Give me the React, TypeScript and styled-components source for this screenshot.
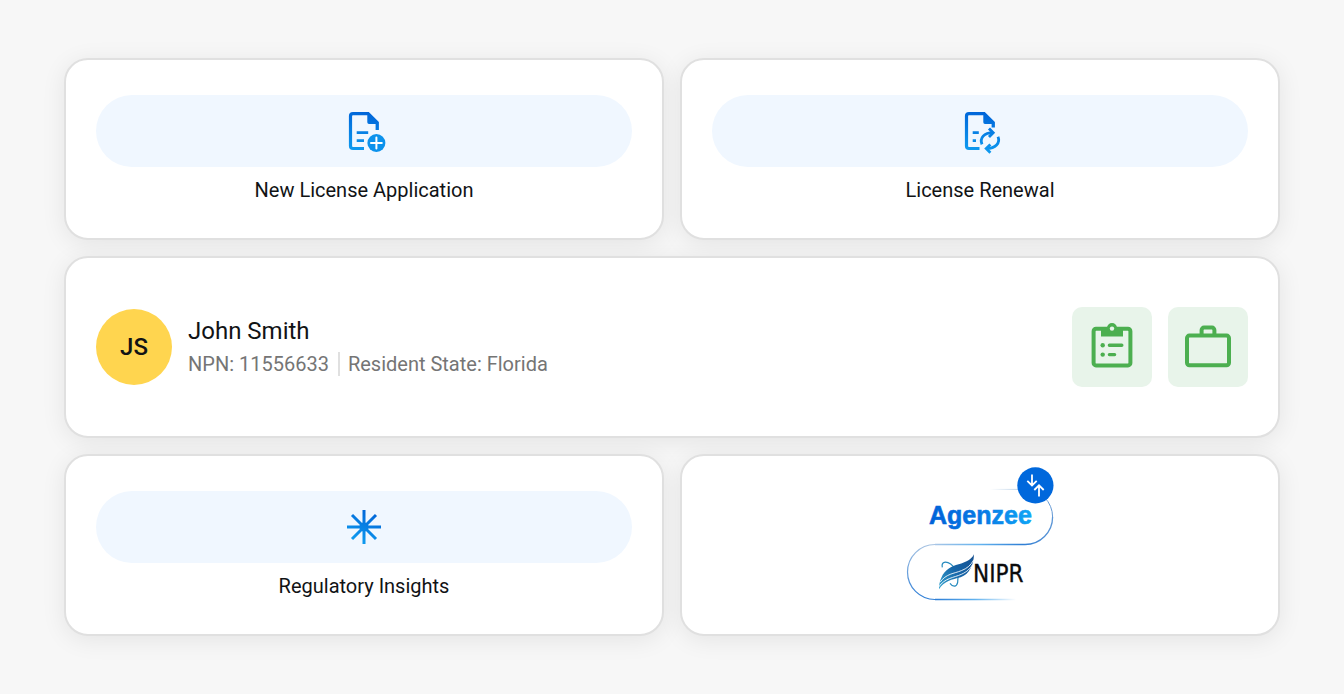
import React from "react";
import styled, { createGlobalStyle } from "styled-components";

const GlobalStyle = createGlobalStyle`
  *, *::before, *::after { box-sizing: border-box; }
  body {
    margin: 0;
    background: #f7f7f7;
    color: #111315;
    font-family: Roboto, "Open Sans", sans-serif;
  }
`;

const Page = styled.main`
  display: grid;
  grid-template-columns: 1fr 1fr;
  gap: 16px;
  padding: 58px 64px;
`;

const cardSurface = `
  min-height: 182px;
  border: 2px solid #e0e0e0;
  border-radius: 24px;
  background: #ffffff;
  box-shadow: 0 4px 24px rgba(0, 0, 0, 0.08);
`;

const ActionCard = styled.button`
  ${cardSurface}
  display: flex;
  flex-direction: column;
  justify-content: flex-start;
  gap: 8px;
  padding: 35px 30px 32px;
  color: inherit;
  font: inherit;
  cursor: pointer;
`;

const IconPill = styled.span`
  display: flex;
  align-items: center;
  justify-content: center;
  width: 100%;
  height: 72px;
  border-radius: 36px;
  background: #f0f7ff;
`;

const ActionLabel = styled.span`
  width: 100%;
  font-size: 20px;
  line-height: 30px;
  text-align: center;
`;

const ProfileCard = styled.section`
  ${cardSurface}
  grid-column: 1 / -1;
  display: flex;
  align-items: center;
  gap: 16px;
  padding: 0 30px;
`;

const Avatar = styled.div`
  display: flex;
  align-items: center;
  justify-content: center;
  width: 76px;
  height: 76px;
  border-radius: 50%;
  background: #ffd54f;
  font-size: 24px;
  font-weight: 500;
`;

const Identity = styled.div`
  flex: 1;
  padding-bottom: 2px;
`;

const Name = styled.h2`
  margin: 0;
  font-size: 24px;
  font-weight: 400;
  line-height: 36px;
`;

const Facts = styled.p`
  display: flex;
  align-items: center;
  min-height: 30px;
  margin: 0;
  color: #757575;
  font-size: 20px;
  line-height: 24px;
`;

const Fact = styled.span`
  & + & {
    margin-left: 9px;
    padding-left: 8px;
    border-left: 2px solid #e0e0e0;
  }
`;

const IconButton = styled.button`
  display: flex;
  align-items: center;
  justify-content: center;
  width: 80px;
  height: 80px;
  padding: 0;
  border: 0;
  border-radius: 10px;
  background: #e8f4ea;
  color: #4caf50;
  cursor: pointer;
`;

const PartnerCard = styled.section`
  ${cardSurface}
  display: flex;
  align-items: flex-start;
  justify-content: center;
  padding-top: 10px;
`;

function BlueGradient({ id }: { id: string }) {
  return (
    <linearGradient id={id} gradientUnits="userSpaceOnUse" x1="28" y1="5" x2="22" y2="46">
      <stop offset="0" stopColor="#0064d8" />
      <stop offset="1" stopColor="#0f9cf0" />
    </linearGradient>
  );
}

function NewDocumentIcon() {
  return (
    <svg width="48" height="48" viewBox="0 0 48 48" aria-hidden="true">
      <defs><BlueGradient id="newDoc" /></defs>
      <path
        d="M29 6.6H13a2.5 2.5 0 0 0-2.5 2.5V39a2.5 2.5 0 0 0 2.5 2.5H24"
        fill="none"
        stroke="url(#newDoc)"
        strokeWidth="3.2"
      />
      <path d="M27.3 5H28.8L38.9 15.1V23H35.6V17H29a1.7 1.7 0 0 1-1.7-1.7Z" fill="url(#newDoc)" />
      <path d="M16.7 25.7H28.2M16.7 33.7H24" fill="none" stroke="url(#newDoc)" strokeWidth="2.8" />
      <circle cx="36.4" cy="36" r="9" fill="#0c92ec" />
      <path d="M36.4 30.6V41.4M31 36H41.8" stroke="#fff" strokeWidth="2" strokeLinecap="round" />
    </svg>
  );
}

function RenewDocumentIcon() {
  return (
    <svg width="48" height="48" viewBox="0 0 48 48" aria-hidden="true">
      <defs><BlueGradient id="renewDoc" /></defs>
      <path
        d="M29 6.6H13a2.5 2.5 0 0 0-2.5 2.5V39a2.5 2.5 0 0 0 2.5 2.5H23.5"
        fill="none"
        stroke="url(#renewDoc)"
        strokeWidth="3.2"
      />
      <path d="M27.3 5H28.8L38.9 15.1V20.5H35.6V17H29a1.7 1.7 0 0 1-1.7-1.7Z" fill="url(#renewDoc)" />
      <g fill="none" stroke="url(#renewDoc)" strokeWidth="2.8">
        <path d="M16.7 25.7H22.8M16.7 33.7H20" />
        <path d="M26 37.4C23.4 31 28 25.7 37 25.7" />
        <path d="M33 21.4L37.2 25.7L33 30" />
        <path d="M42 29.8C44.6 36 39.4 41.6 30.6 41.6" />
        <path d="M34.4 37.4L30.2 41.6L34.4 45.8" />
      </g>
    </svg>
  );
}

function InsightsIcon() {
  return (
    <svg width="48" height="48" viewBox="0 0 48 48" aria-hidden="true">
      <defs>
        <linearGradient id="insight" gradientUnits="userSpaceOnUse" x1="32" y1="7" x2="16" y2="41">
          <stop offset="0" stopColor="#0062d6" />
          <stop offset="1" stopColor="#10a0f2" />
        </linearGradient>
      </defs>
      <path
        d="M24 7V41M7 24H41M12 12L36 36M36 12L12 36"
        fill="none"
        stroke="url(#insight)"
        strokeWidth="3"
      />
      <circle cx="24" cy="24" r="4.6" fill="url(#insight)" />
    </svg>
  );
}

function ClipboardIcon() {
  return (
    <svg width="48" height="48" viewBox="0 0 48 48" aria-hidden="true">
      <g fill="none" stroke="currentColor">
        <rect x="5.6" y="5.8" width="36.8" height="36.6" rx="2.4" strokeWidth="4" />
        <path d="M21.4 22.3H33.8M21.4 31.6H26.6" strokeWidth="3.4" strokeLinecap="round" />
      </g>
      <path fill="currentColor" d="M13 5H19A5 5 0 0 1 29 5H35V13.4H13Z" />
      <circle cx="24" cy="5.6" r="2.2" fill="#e8f4ea" />
      <circle cx="14.7" cy="22.3" r="2.2" fill="currentColor" />
      <circle cx="14.7" cy="31.6" r="2.2" fill="currentColor" />
    </svg>
  );
}

function BriefcaseIcon() {
  return (
    <svg width="48" height="48" viewBox="0 0 48 48" aria-hidden="true">
      <g fill="none" stroke="currentColor" strokeWidth="4">
        <rect x="3" y="12.6" width="42" height="29.6" rx="2.4" />
        <path d="M17.6 12V7a2.4 2.4 0 0 1 2.4-2.4H28A2.4 2.4 0 0 1 30.4 7V12" />
      </g>
    </svg>
  );
}

function PartnerLogos() {
  return (
    <svg width="148" height="136" viewBox="0 0 148 136" role="img" aria-label="Agenzee and NIPR">
      <defs>
        <linearGradient id="word" gradientUnits="userSpaceOnUse" x1="23" y1="0" x2="125" y2="0">
          <stop offset="0" stopColor="#0062d8" />
          <stop offset="0.5" stopColor="#0878e4" />
          <stop offset="1" stopColor="#0fa5f5" />
        </linearGradient>
        <linearGradient id="upper" gradientUnits="userSpaceOnUse" x1="84" y1="0" x2="148" y2="0">
          <stop offset="0" stopColor="#b8cfe6" stopOpacity="0" />
          <stop offset="0.5" stopColor="#b8cfe6" />
          <stop offset="1" stopColor="#5d94d2" />
        </linearGradient>
        <linearGradient id="middle" gradientUnits="userSpaceOnUse" x1="146" y1="0" x2="28" y2="0">
          <stop offset="0" stopColor="#5b95d6" />
          <stop offset="0.25" stopColor="#2f7ed4" />
          <stop offset="0.6" stopColor="#62b2ee" />
          <stop offset="1" stopColor="#a9c6e6" />
        </linearGradient>
        <linearGradient id="leftCurve" gradientUnits="userSpaceOnUse" x1="0" y1="78" x2="0" y2="134">
          <stop offset="0" stopColor="#a9c4e2" />
          <stop offset="0.5" stopColor="#6aa0dc" />
          <stop offset="1" stopColor="#2c7dd6" />
        </linearGradient>
        <linearGradient id="lower" gradientUnits="userSpaceOnUse" x1="28" y1="0" x2="110" y2="0">
          <stop offset="0" stopColor="#2c7dd6" />
          <stop offset="0.5" stopColor="#62b2ee" />
          <stop offset="1" stopColor="#62b2ee" stopOpacity="0" />
        </linearGradient>
        <linearGradient id="wing" gradientUnits="userSpaceOnUse" x1="28" y1="130" x2="130" y2="30">
          <stop offset="0" stopColor="#35a3cf" />
          <stop offset="0.5" stopColor="#1565a8" />
          <stop offset="1" stopColor="#16508f" />
        </linearGradient>
      </defs>
      <g fill="none">
        <path d="M84 23.4H119A27.5 27.5 0 0 1 146.6 51" stroke="url(#upper)" />
        <path d="M146.6 51A27.5 27.5 0 0 1 119 78.5H29" stroke="url(#middle)" strokeWidth="1.3" />
        <path d="M29 78.5A27.5 27.5 0 0 0 29 133.5" stroke="url(#leftCurve)" strokeWidth="1.2" />
        <path d="M29 132.8H110V134.2H29Z" fill="url(#lower)" />
      </g>
      <circle cx="129.4" cy="19.4" r="18.1" fill="#0068dc" />
      <path
        d="M126 8.5V19.3M121.3 14.8L126 19.5L130.7 14.8M133 30.6V19.7M128.3 24L133 19.3L137.7 24"
        fill="none"
        stroke="#fff"
        strokeWidth="1.8"
      />
      <text
        x="23"
        y="58"
        fill="url(#word)"
        stroke="url(#word)"
        strokeWidth="0.6"
        fontFamily='"Liberation Sans", Arial, sans-serif'
        fontSize="25"
        fontWeight="700"
      >
        Agenzee
      </text>
      <g transform="translate(24 79) scale(0.3333)">
        <path
          d="M37 67C33 50 48 48 62 57C78 68 88 92 83 112C80 127 68 126 60 115"
          fill="none"
          stroke="#2389bd"
          strokeWidth="3.6"
        />
        <path
          d="M34 98C44 74 64 64 86 58C108 52 124 44 132 28C131 60 118 88 92 97C66 104 42 108 27 133C27 120 29 108 34 98Z"
          fill="url(#wing)"
        />
        <path
          d="M30 112C48 86 72 86 94 77C112 70 122 61 131 45M26 126C44 99 72 98 94 88C112 80 120 71 127 60"
          fill="none"
          stroke="#fff"
          strokeWidth="2.6"
        />
      </g>
      <text
        x="67"
        y="116"
        fill="#0b0b0c"
        stroke="#0b0b0c"
        strokeWidth="0.3"
        fontFamily='"DejaVu Sans Condensed", Roboto, sans-serif'
        fontSize="24"
      >
        NIPR
      </text>
    </svg>
  );
}

function ActionTile({ label, children }: { label: string; children: React.ReactNode }) {
  return (
    <ActionCard type="button">
      <IconPill>{children}</IconPill>
      <ActionLabel>{label}</ActionLabel>
    </ActionCard>
  );
}

export default function App() {
  return (
    <>
      <GlobalStyle />
      <Page>
        <ActionTile label="New License Application"><NewDocumentIcon /></ActionTile>
        <ActionTile label="License Renewal"><RenewDocumentIcon /></ActionTile>
        <ProfileCard>
          <Avatar>JS</Avatar>
          <Identity>
            <Name>John Smith</Name>
            <Facts>
              <Fact>NPN: 11556633</Fact>
              <Fact>Resident State: Florida</Fact>
            </Facts>
          </Identity>
          <IconButton type="button" aria-label="Checklist"><ClipboardIcon /></IconButton>
          <IconButton type="button" aria-label="Briefcase"><BriefcaseIcon /></IconButton>
        </ProfileCard>
        <ActionTile label="Regulatory Insights"><InsightsIcon /></ActionTile>
        <PartnerCard>
          <PartnerLogos />
        </PartnerCard>
      </Page>
    </>
  );
}
